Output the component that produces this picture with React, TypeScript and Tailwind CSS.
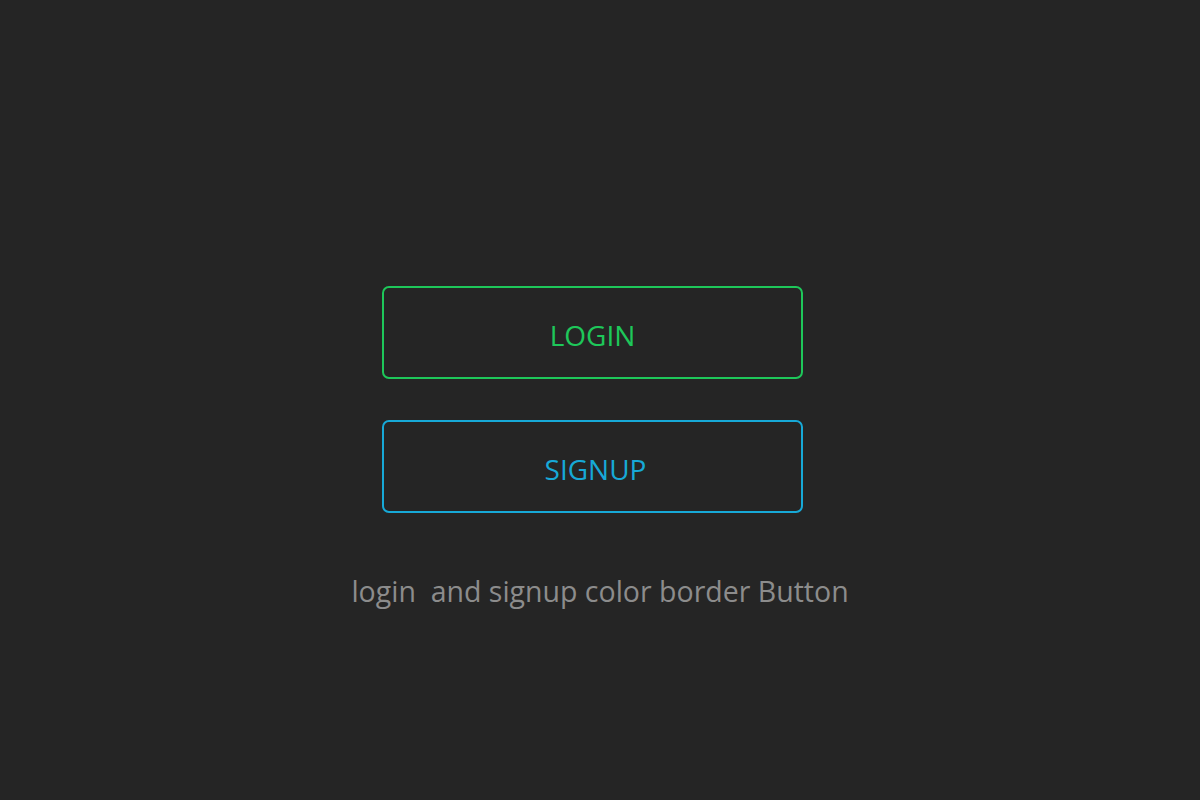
export default function App() {
  return (
    <div className="w-[1200px] h-[800px] bg-[#252525] flex flex-col items-center" style={{ fontFamily: "'Open Sans', sans-serif" }}>
      <button className="mt-[286px] w-[421px] h-[93px] border-2 border-[#1ec75a] rounded-[7px] text-[#1ec75a] text-[28px] pt-[4px] flex items-center justify-center ml-[-15px]">
        LOGIN
      </button>
      <button className="mt-[41px] w-[421px] h-[93px] border-2 border-[#17a9d7] rounded-[7px] text-[#17a9d7] text-[28px] pt-[4px] pl-[6px] flex items-center justify-center ml-[-15px]">
        SIGNUP
      </button>
      <p className="mt-[60px] text-[28.5px] text-[#8c8c8c] whitespace-pre leading-[1.3]">login  and signup color border Button</p>
    </div>
  );
}
